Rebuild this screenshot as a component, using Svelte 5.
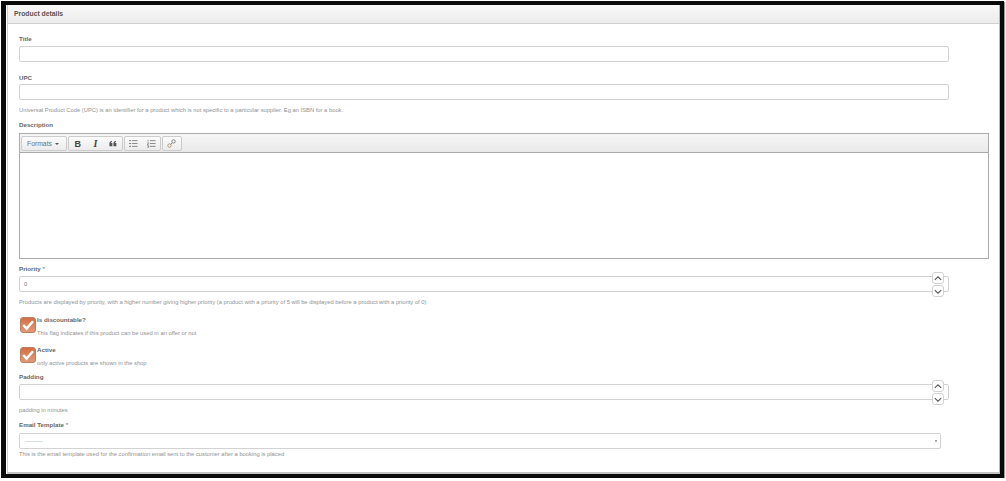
<script lang="ts">
  const chevUp = "M3 7.5 L6.5 4.2 L10 7.5";
  const chevDown = "M3 4.5 L6.5 7.8 L10 4.5";
</script>

{#snippet spinner()}
  <div class="spin">
    <button class="spin-btn up" aria-label="up">
      <svg width="12" height="11" viewBox="0 0 13 12"><path d={chevUp} /></svg>
    </button>
    <button class="spin-btn" aria-label="down">
      <svg width="12" height="11" viewBox="0 0 13 12"><path d={chevDown} /></svg>
    </button>
  </div>
{/snippet}

{#snippet check()}
  <span class="check">
    <svg width="16" height="16" viewBox="0 0 16 16"><path d="M3.2 8 L6.6 11.6 L13 4.2" /></svg>
  </span>
{/snippet}

<div class="frame">
  <div class="panel">
    <div class="head">Product details</div>
    <div class="body">
      <div class="lbl first">Title</div>
      <input class="inp" type="text" />

      <div class="lbl gap-big">UPC</div>
      <input class="inp" type="text" />
      <p class="help">Universal Product Code (UPC) is an identifier for a product which is not specific to a particular supplier. Eg an ISBN for a book.</p>

      <div class="lbl desc">Description</div>
      <div class="editor">
        <div class="toolbar">
          <div class="grp"><span class="formats">Formats <i class="caret"></i></span></div>
          <div class="grp">
            <span class="tb b">B</span>
            <span class="tb it">I</span>
            <span class="tb quote">
              <svg width="8" height="7" viewBox="0 0 10 8"><path d="M0.5 7.5V4.4C0.5 2.4 1.6 1 3.6 0.6V2C2.8 2.2 2.3 2.8 2.3 3.5H4.2V7.5ZM5.5 7.5V4.4C5.5 2.4 6.6 1 8.6 0.6V2C7.8 2.2 7.3 2.8 7.3 3.5H9.2V7.5Z" /></svg>
            </span>
          </div>
          <div class="grp">
            <span class="tb">
              <svg class="lines" width="9" height="9" viewBox="0 0 11 10"><path d="M0.5 1.5h1.5M0.5 5h1.5M0.5 8.5h1.5" class="dots" /><path d="M3.5 1.5h7M3.5 5h7M3.5 8.5h7" /></svg>
            </span>
            <span class="tb">
              <svg class="lines" width="9" height="9" viewBox="0 0 11 10"><path d="M1.2 0.5v2.2M0.4 4.2h1.6L0.4 6.4h1.6M0.4 7.8h1.6v1.8H0.4" class="dots thin" /><path d="M3.5 1.5h7M3.5 5h7M3.5 8.5h7" /></svg>
            </span>
          </div>
          <div class="grp">
            <span class="tb linkbox">
              <svg class="link" width="9" height="9" viewBox="0 0 11 11"><circle cx="3" cy="8" r="2.1" /><circle cx="8" cy="3" r="2.1" /><path d="M4.4 6.6 L6.6 4.4" /></svg>
            </span>
          </div>
        </div>
        <div class="area"></div>
      </div>

      <div class="lbl prio">Priority <span class="req">*</span></div>
      <div class="numwrap">
        <input class="inp" type="text" value="0" />
        {@render spinner()}
      </div>
      <p class="help">Products are displayed by priority, with a higher number giving higher priority (a product with a priority of 5 will be displayed before a product with a priority of 0)</p>

      <div class="checkrow one">
        {@render check()}
        <div>
          <div class="lbl">Is discountable?</div>
          <p class="help in">This flag indicates if this product can be used in an offer or not</p>
        </div>
      </div>
      <div class="checkrow two">
        {@render check()}
        <div>
          <div class="lbl">Active</div>
          <p class="help in">only active products are shown in the shop</p>
        </div>
      </div>

      <div class="lbl pad">Padding</div>
      <div class="numwrap">
        <input class="inp" type="text" />
        {@render spinner()}
      </div>
      <p class="help">padding in minutes</p>

      <div class="lbl mail">Email Template <span class="req">*</span></div>
      <div class="select">
        <span>---------</span>
        <i class="sel-caret"></i>
      </div>
      <p class="help last">This is the email template used for the confirmation email sent to the customer after a booking is placed</p>
    </div>
  </div>
</div>

<style>
  :global(body) {
    margin: 0;
    background: #fff;
    font-family: "Liberation Sans", Arial, sans-serif;
  }
  .frame {
    box-sizing: border-box;
    width: 1003px;
    height: 477px;
    margin-left: 1px;
    margin-top: 1px;
    border: 4px solid #0a0a0a;
    border-left-width: 5px;
    background: #fff;
    box-shadow: 1px 1px 1px #999;
  }
  .panel {
    box-sizing: border-box;
    height: 469px;
    margin-left: 1px;
    border-left: 1px solid #ccc;
    border-right: 1px solid #bbb;
    border-bottom: 2px solid #c4c4c4;
    background: #fff;
  }
  .head {
    box-sizing: border-box;
    height: 19px;
    padding: 4px 0 0 6px;
    font-size: 6.8px;
    line-height: 10px;
    font-weight: bold;
    color: #5c5650;
    background: linear-gradient(#f8f8f8, #ececec);
    border-bottom: 1px solid #cfcfcf;
  }
  .body {
    padding: 0 0 0 11px;
  }
  .lbl {
    font-size: 6.2px;
    line-height: 9px;
    font-weight: bold;
    color: #666;
  }
  .req {
    font-weight: normal;
  }
  .first {
    margin-top: 10px;
    margin-bottom: 3px;
  }
  .gap-big {
    margin-top: 11px;
    margin-bottom: 2px;
  }
  .inp {
    display: block;
    box-sizing: border-box;
    width: 930px;
    height: 16px;
    margin: 0;
    padding: 0 4px;
    background: #fff;
    border: 1px solid #d2d2d2;
    border-radius: 2px;
    font: 5.8px "Liberation Sans", Arial, sans-serif;
    color: #777;
    outline: none;
  }
  .help {
    margin: 6px 0 0;
    font-size: 5.8px;
    line-height: 8px;
    color: #919191;
  }
  .desc {
    margin-top: 6px;
    margin-bottom: 4px;
  }
  .editor {
    box-sizing: border-box;
    width: 970px;
    height: 126px;
    border: 1px solid #aaa;
  }
  .toolbar {
    box-sizing: border-box;
    display: flex;
    gap: 1px;
    height: 19px;
    padding: 2px 0 0 1px;
    background: linear-gradient(#f6f6f6, #e9e9e9);
    border-bottom: 1px solid #aaa;
  }
  .grp {
    display: flex;
    align-items: center;
    box-sizing: border-box;
    height: 15px;
    border: 1px solid #ccc;
    border-radius: 2px;
    background: linear-gradient(#fbfbfb, #ececec);
    color: #555;
  }
  .formats {
    box-sizing: border-box;
    width: 44px;
    padding-left: 5px;
    font-size: 6.8px;
    color: #5f7488;
    white-space: nowrap;
  }
  .caret {
    display: inline-block;
    margin-left: 1px;
    vertical-align: 1px;
    border-left: 2px solid transparent;
    border-right: 2px solid transparent;
    border-top: 2px solid #555;
  }
  .tb {
    display: flex;
    align-items: center;
    justify-content: center;
    width: 17.6px;
    height: 13px;
    font-size: 9px;
    font-weight: bold;
    color: #444;
  }
  .tb.it {
    font-family: "Liberation Serif", serif;
    font-style: italic;
    font-size: 10px;
  }
  .linkbox {
    width: 18px;
  }
  .quote svg {
    fill: #555;
  }
  .lines path {
    fill: none;
    stroke: #666;
    stroke-width: 0.9;
  }
  .lines .dots {
    stroke: #333;
    stroke-width: 1.2;
  }
  .lines .thin {
    stroke-width: 0.6;
  }
  .link circle,
  .link path {
    fill: none;
    stroke: #777;
    stroke-width: 1;
  }
  .link circle:first-child {
    stroke: #a98466;
  }
  .area {
    height: 105px;
    background: #fff;
  }
  .prio {
    margin-top: 5px;
    margin-bottom: 3px;
  }
  .numwrap {
    position: relative;
    width: 930px;
  }
  .spin {
    position: absolute;
    left: 913px;
    top: -4px;
    display: flex;
    flex-direction: column;
    gap: 1px;
  }
  .spin-btn {
    display: block;
    box-sizing: border-box;
    width: 12px;
    height: 12px;
    padding: 0;
    background: #fff;
    border: 1px solid #d2d2d2;
    border-radius: 3px;
  }
  .spin-btn svg {
    display: block;
    margin: 0 0 0 -1px;
  }
  .spin-btn path {
    fill: none;
    stroke: #555;
    stroke-width: 1.2;
  }
  .checkrow {
    display: flex;
    gap: 0;
  }
  .checkrow .lbl {
    line-height: 8px;
    margin-top: -1px;
  }
  .one {
    margin-top: 11px;
  }
  .two {
    margin-top: 10px;
  }
  .check {
    box-sizing: border-box;
    width: 16px;
    height: 16px;
    margin: 0 1px 0 1px;
    background: linear-gradient(#d26f45, #e29a78);
    border: 1px solid #b9805f;
    border-radius: 3px;
    flex: none;
  }
  .check svg {
    display: block;
    margin: -1px 0 0 -1px;
  }
  .check path {
    fill: none;
    stroke: #fff;
    stroke-width: 2.4;
  }
  .help.in {
    margin-top: 5px;
  }
  .pad {
    margin-top: 5px;
    margin-bottom: 3px;
  }
  .mail {
    margin-top: 6px;
    margin-bottom: 4px;
  }
  .select {
    position: relative;
    box-sizing: border-box;
    width: 922px;
    height: 16px;
    padding: 0 5px;
    border: 1px solid #d2d2d2;
    border-radius: 2px;
    font-size: 5.8px;
    line-height: 14px;
    color: #999;
  }
  .sel-caret {
    position: absolute;
    right: 3px;
    top: 6px;
    border-left: 1.5px solid transparent;
    border-right: 1.5px solid transparent;
    border-top: 3px solid #888;
  }
  .last {
    margin-top: 1px;
  }
</style>
